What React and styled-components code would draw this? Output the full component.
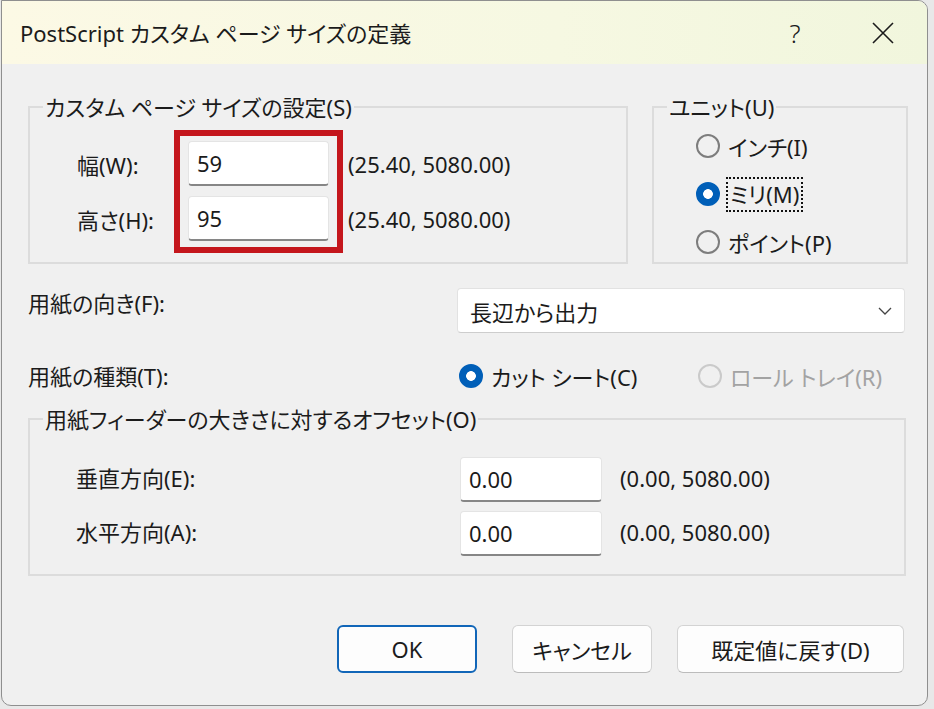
import React from 'react';
import styled, { createGlobalStyle } from 'styled-components';

const GlobalStyle = createGlobalStyle`
  html, body {
    margin: 0;
    padding: 0;
  }

  body {
    background: #e8e8e8;
    font-family: "Noto Sans", "Noto Sans CJK JP", sans-serif;
    font-feature-settings: "palt";
    color: #1b1b1b;
  }
`;

const Window = styled.div`
  box-sizing: border-box;
  width: 927px;
  height: 706px;
  margin-left: 1px;
  background: #f0f0f0;
  border: 1px solid #8f8f8f;
  border-radius: 0 10px 10px 10px;
  overflow: hidden;
  display: flex;
  flex-direction: column;
`;

const TitleBar = styled.div`
  height: 63px;
  flex-shrink: 0;
  display: flex;
  align-items: center;
  padding-left: 18px;
  background: linear-gradient(90deg, #fcf9e5 0%, #f6f8e2 60%, #f1f6dd 100%);
`;

const Title = styled.span`
  font-size: 22px;
  line-height: 30px;
  white-space: nowrap;
`;

const CaptionButtons = styled.div`
  margin-left: auto;
  display: flex;
  height: 100%;
`;

const CaptionButton = styled.div`
  width: 88px;
  height: 100%;
  display: flex;
  align-items: center;
  justify-content: center;
  font-size: 26px;
  font-weight: 300;
`;

const Content = styled.div`
  flex: 1;
  display: flex;
  flex-direction: column;
  padding: 29px 18px 0 26px;
  font-size: 22px;
`;

const TopRow = styled.div`
  display: flex;
  gap: 24px;
`;

const GroupBox = styled.fieldset`
  box-sizing: border-box;
  margin: 0;
  min-width: 0;
  width: ${(p) => p.$width}px;
  height: 171px;
  padding: 0 13px;
  border: 2px solid #dcdcdc;
  margin-top: ${(p) => p.$top || 0}px;
`;

const Legend = styled.legend`
  padding: 0 2px;
  font-size: 22px;
  line-height: 28px;
  white-space: nowrap;
`;

const SizeLayout = styled.div`
  display: flex;
  margin-top: 9px;
  padding-left: 34px;
`;

const Column = styled.div`
  display: flex;
  flex-direction: column;
  gap: 10px;
  padding-top: 11px;
  width: ${(p) => (p.$width ? `${p.$width}px` : 'auto')};
  margin-left: ${(p) => p.$offset || 0}px;
`;

const Cell = styled.div`
  height: 45px;
  display: flex;
  align-items: center;
  white-space: nowrap;
`;

const Highlight = styled.div`
  display: flex;
  flex-direction: column;
  gap: 10px;
  padding: 5px 8px 6px;
  border: 6px solid #c4161c;
`;

const Field = styled.div`
  box-sizing: border-box;
  width: ${(p) => p.$width}px;
  height: 45px;
  display: flex;
  align-items: center;
  padding: 0 8px;
  background: #ffffff;
  border: 1px solid #e4e4e4;
  border-bottom: 2px solid #868686;
  border-radius: 4px;
`;

const UnitList = styled.div`
  display: flex;
  flex-direction: column;
  gap: 8px;
  margin-top: 5px;
  padding-left: 29px;
`;

const RadioOption = styled.div`
  display: flex;
  align-items: center;
  gap: 8px;
  height: 40px;
  width: ${(p) => (p.$width ? `${p.$width}px` : 'auto')};
  color: ${(p) => (p.$disabled ? '#a3a3a3' : '#1b1b1b')};
  white-space: nowrap;
`;

const RadioMark = styled.span`
  box-sizing: border-box;
  flex-shrink: 0;
  width: 24px;
  height: 24px;
  border-radius: 50%;
  border: 2px solid
    ${(p) => (p.$checked ? '#005fb8' : p.$disabled ? '#cacaca' : '#7d7d7d')};
  background: ${(p) =>
    p.$checked
      ? 'radial-gradient(circle, #ffffff 0 4.5px, #005fb8 5.2px)'
      : 'transparent'};
`;

const FocusText = styled.span`
  padding: 1px 2px;
  line-height: 29px;
  outline: 2px dotted #111111;
  outline-offset: 0;
`;

const OptionRow = styled.div`
  display: flex;
  align-items: ${(p) => (p.$center ? 'center' : 'flex-start')};
  margin-top: ${(p) => p.$top}px;
`;

const RowLabel = styled.div`
  width: 429px;
  flex-shrink: 0;
  line-height: 28px;
  margin-top: ${(p) => (p.$center ? 0 : 1)}px;
  white-space: nowrap;
`;

const Select = styled.div`
  box-sizing: border-box;
  width: 448px;
  height: 45px;
  display: flex;
  align-items: center;
  justify-content: space-between;
  padding: 0 12px 0 12px;
  background: #ffffff;
  border: 1px solid #e2e2e2;
  border-bottom-color: #cdcdcd;
  border-radius: 4px;
`;

const RadioGroup = styled.div`
  display: flex;
  margin-left: 2px;
`;

const OffsetList = styled.div`
  display: flex;
  flex-direction: column;
  gap: 9px;
  padding: 24px 0 0 33px;
`;

const OffsetRow = styled.div`
  display: flex;
  align-items: center;
`;

const OffsetLabel = styled.div`
  width: 384px;
  padding-bottom: 6px;
  white-space: nowrap;
`;

const Range = styled.div`
  margin-left: 18px;
  padding-bottom: 4px;
  white-space: nowrap;
`;

const ButtonRow = styled.div`
  display: flex;
  justify-content: flex-end;
  gap: 25px;
  margin: 49px 5px 0 0;
`;

const Button = styled.div`
  box-sizing: border-box;
  width: ${(p) => p.$width}px;
  height: 48px;
  display: flex;
  align-items: center;
  justify-content: center;
  background: #fdfdfd;
  border: ${(p) => (p.$primary ? '2px solid #1166b8' : '1px solid #d3d3d3')};
  border-bottom-color: ${(p) => (p.$primary ? '#1166b8' : '#bcbcbc')};
  border-radius: 6px;
  margin-right: ${(p) => (p.$primary ? 10 : 0)}px;
  white-space: nowrap;
`;

const CloseIcon = () => (
  <svg width="22" height="22" viewBox="0 0 22 22">
    <path d="M1 1 L21 21 M21 1 L1 21" stroke="#1b1b1b" strokeWidth="1.6" fill="none" />
  </svg>
);

const Chevron = () => (
  <svg width="14" height="8" viewBox="0 0 14 8">
    <path d="M1 1 L7 7 L13 1" stroke="#444" strokeWidth="1.3" fill="none" />
  </svg>
);

const Radio = ({ label, checked, disabled, focused, width }) => (
  <RadioOption $disabled={disabled} $width={width}>
    <RadioMark $checked={checked} $disabled={disabled} />
    {focused ? <FocusText>{label}</FocusText> : <span>{label}</span>}
  </RadioOption>
);

export default function App() {
  return (
    <>
      <GlobalStyle />
      <Window>
        <TitleBar>
          <Title>PostScript カスタム ページ サイズの定義</Title>
          <CaptionButtons>
            <CaptionButton>?</CaptionButton>
            <CaptionButton>
              <CloseIcon />
            </CaptionButton>
          </CaptionButtons>
        </TitleBar>

        <Content>
          <TopRow>
            <GroupBox $width={600}>
              <Legend>カスタム ページ サイズの設定(S)</Legend>
              <SizeLayout>
                <Column $width={97}>
                  <Cell>幅(W):</Cell>
                  <Cell>高さ(H):</Cell>
                </Column>
                <Highlight>
                  <Field $width={141}>59</Field>
                  <Field $width={141}>95</Field>
                </Highlight>
                <Column $offset={5}>
                  <Cell>(25.40, 5080.00)</Cell>
                  <Cell>(25.40, 5080.00)</Cell>
                </Column>
              </SizeLayout>
            </GroupBox>

            <GroupBox $width={256}>
              <Legend>ユニット(U)</Legend>
              <UnitList>
                <Radio label="インチ(I)" />
                <Radio label="ミリ(M)" checked focused />
                <Radio label="ポイント(P)" />
              </UnitList>
            </GroupBox>
          </TopRow>

          <OptionRow $top={24}>
            <RowLabel>用紙の向き(F):</RowLabel>
            <Select>
              <span>長辺から出力</span>
              <Chevron />
            </Select>
          </OptionRow>

          <OptionRow $top={23} $center>
            <RowLabel $center>用紙の種類(T):</RowLabel>
            <RadioGroup>
              <Radio label="カット シート(C)" checked width={239} />
              <Radio label="ロール トレイ(R)" disabled />
            </RadioGroup>
          </OptionRow>

          <GroupBox $width={878} $top={9}>
            <Legend>用紙フィーダーの大きさに対するオフセット(O)</Legend>
            <OffsetList>
              <OffsetRow>
                <OffsetLabel>垂直方向(E):</OffsetLabel>
                <Field $width={142}>0.00</Field>
                <Range>(0.00, 5080.00)</Range>
              </OffsetRow>
              <OffsetRow>
                <OffsetLabel>水平方向(A):</OffsetLabel>
                <Field $width={142}>0.00</Field>
                <Range>(0.00, 5080.00)</Range>
              </OffsetRow>
            </OffsetList>
          </GroupBox>

          <ButtonRow>
            <Button $width={140} $primary>OK</Button>
            <Button $width={140}>キャンセル</Button>
            <Button $width={227}>既定値に戻す(D)</Button>
          </ButtonRow>
        </Content>
      </Window>
    </>
  );
}
